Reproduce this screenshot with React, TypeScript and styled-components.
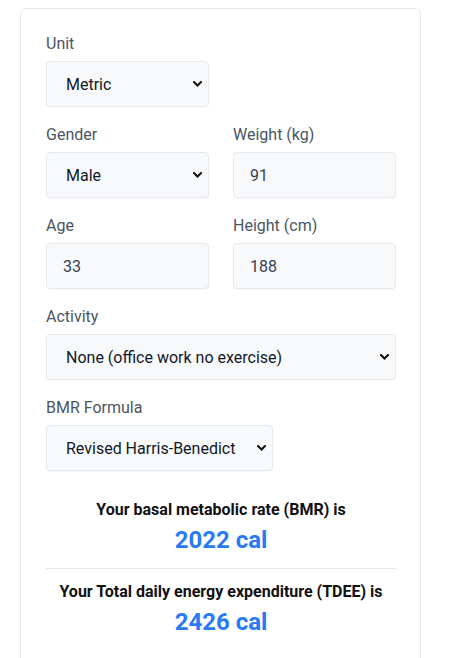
import React, { useState } from "react";
import styled, { createGlobalStyle } from "styled-components";

const Global = createGlobalStyle`
  * { box-sizing: border-box; }
  body { margin: 0; background: #ffffff; font-family: Roboto, "Liberation Sans", Arial, sans-serif; }
`;

const Page = styled.div`
  padding: 8px 29px 0 20px;
`;

const Card = styled.div`
  width: 401px;
  min-height: 680px;
  border: 1px solid #e5e9ef;
  border-radius: 6px;
  padding: 24px 24px 24px 25px;
  background: #fff;
`;

const Form = styled.div`
  display: flex;
  flex-direction: column;
  gap: 17px;
`;

const Row = styled.div`
  display: grid;
  grid-template-columns: 163px 163px;
  column-gap: 24px;
`;

const Field = styled.div<{ $width?: number }>`
  display: flex;
  flex-direction: column;
  width: ${(p) => (p.$width ? `${p.$width}px` : "auto")};
`;

const Label = styled.label`
  font-size: 16px;
  line-height: 22px;
  color: #4b5563;
  margin-bottom: 6px;
`;

const baseControl = `
  height: 46px;
  border: 1px solid #e6e9ee;
  border-radius: 4px;
  background: #f8f9fb;
  font-family: Roboto, "Liberation Sans", Arial, sans-serif;
  font-size: 16px;
  box-shadow: 0 1px 1px rgba(0,0,0,0.03);
  outline: none;
  width: 100%;
`;

const SelectWrap = styled.div`
  position: relative;
  display: flex;
`;

const Select = styled.select`
  ${baseControl}
  appearance: none;
  -webkit-appearance: none;
  color: #111827;
  padding: 0 28px 0 19px;
`;

const Chevron = styled.svg`
  position: absolute;
  right: 7px;
  top: 50%;
  margin-top: -3px;
  width: 9px;
  height: 6px;
  pointer-events: none;
`;

const Input = styled.input`
  ${baseControl}
  color: #374151;
  padding: 0 16px;
`;

const Results = styled.div`
  margin-top: 27px;
  display: flex;
  flex-direction: column;
  align-items: center;
  text-align: center;
`;

const ResultTitle = styled.div`
  font-size: 16px;
  font-weight: 700;
  line-height: 24px;
  color: #111111;
`;

const ResultValue = styled.div`
  font-size: 24px;
  font-weight: 700;
  line-height: 36px;
  color: #2a7af5;
`;

const Divider = styled.hr`
  width: 100%;
  border: 0;
  border-top: 1px solid #e5e7eb;
  margin: 10px 0 11px;
`;

type Opt = { value: string; label: string };

function Dropdown({
  value,
  onChange,
  options,
}: {
  value: string;
  onChange: (v: string) => void;
  options: Opt[];
}) {
  return (
    <SelectWrap>
      <Select value={value} onChange={(e) => onChange(e.target.value)}>
        {options.map((o) => (
          <option key={o.value} value={o.value}>
            {o.label}
          </option>
        ))}
      </Select>
      <Chevron viewBox="0 0 9 6">
        <path d="M1 1 L4.5 4.5 L8 1" fill="none" stroke="#111" strokeWidth="2" strokeLinecap="square" />
      </Chevron>
    </SelectWrap>
  );
}

export default function App() {
  const [unit, setUnit] = useState("metric");
  const [gender, setGender] = useState("male");
  const [weight, setWeight] = useState("91");
  const [age, setAge] = useState("33");
  const [height, setHeight] = useState("188");
  const [activity, setActivity] = useState("none");
  const [formula, setFormula] = useState("rhb");

  return (
    <>
      <Global />
      <Page>
        <Card>
          <Form>
            <Field $width={163}>
              <Label>Unit</Label>
              <Dropdown
                value={unit}
                onChange={setUnit}
                options={[
                  { value: "metric", label: "Metric" },
                  { value: "imperial", label: "Imperial" },
                ]}
              />
            </Field>
            <Row>
              <Field>
                <Label>Gender</Label>
                <Dropdown
                  value={gender}
                  onChange={setGender}
                  options={[
                    { value: "male", label: "Male" },
                    { value: "female", label: "Female" },
                  ]}
                />
              </Field>
              <Field>
                <Label>Weight (kg)</Label>
                <Input value={weight} onChange={(e) => setWeight(e.target.value)} />
              </Field>
            </Row>
            <Row>
              <Field>
                <Label>Age</Label>
                <Input value={age} onChange={(e) => setAge(e.target.value)} />
              </Field>
              <Field>
                <Label>Height (cm)</Label>
                <Input value={height} onChange={(e) => setHeight(e.target.value)} />
              </Field>
            </Row>
            <Field>
              <Label>Activity</Label>
              <Dropdown
                value={activity}
                onChange={setActivity}
                options={[
                  { value: "none", label: "None (office work no exercise)" },
                  { value: "light", label: "Light (1-3 days a week)" },
                ]}
              />
            </Field>
            <Field $width={227}>
              <Label>BMR Formula</Label>
              <Dropdown
                value={formula}
                onChange={setFormula}
                options={[
                  { value: "rhb", label: "Revised Harris-Benedict" },
                  { value: "msj", label: "Mifflin St Jeor" },
                ]}
              />
            </Field>
          </Form>
          <Results>
            <ResultTitle>Your basal metabolic rate (BMR) is</ResultTitle>
            <ResultValue>2022 cal</ResultValue>
            <Divider />
            <ResultTitle>Your Total daily energy expenditure (TDEE) is</ResultTitle>
            <ResultValue>2426 cal</ResultValue>
          </Results>
        </Card>
      </Page>
    </>
  );
}
